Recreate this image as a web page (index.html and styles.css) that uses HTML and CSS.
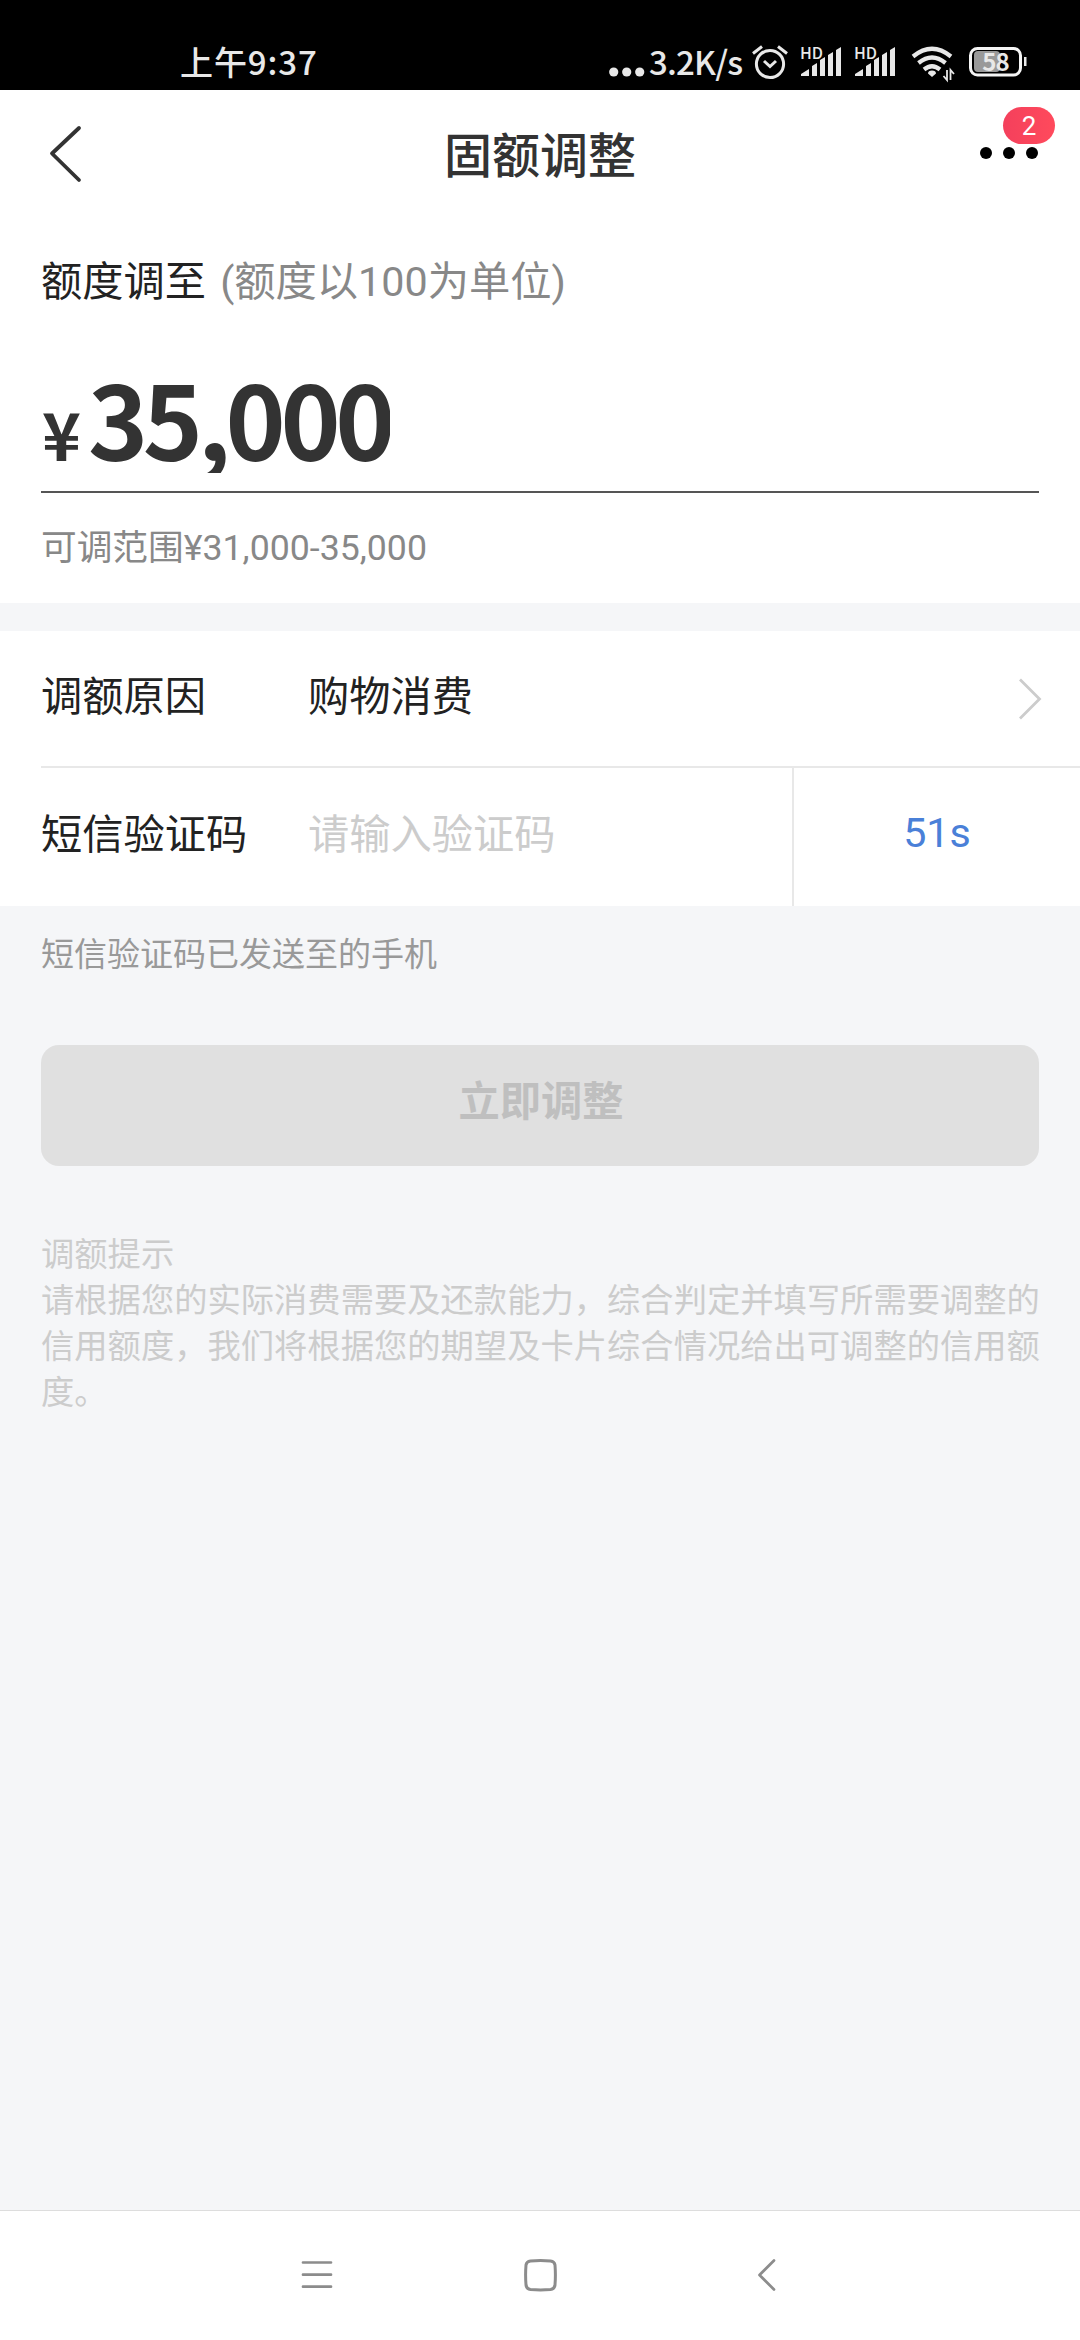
FILE: index.html
```
<!DOCTYPE html>
<html lang="zh-CN">
<head>
    <meta charset="UTF-8">
    <meta name="viewport" content="width=device-width, initial-scale=1.0">
    <title>固额调整</title>
    <link rel="stylesheet" href="styles.css">
</head>
<body>

    <!-- Status bar -->
    <div class="status-bar">
        <span class="status-time">上午9:37</span>
        <div class="status-icons">
            <svg class="icon-dots" width="36" height="50" viewBox="0 0 36 50" fill="#e8e8e8">
                <circle cx="4.7" cy="32" r="4.6"/>
                <circle cx="17.7" cy="32" r="4.6"/>
                <circle cx="30.7" cy="32" r="4.6"/>
            </svg>
            <span class="status-speed">3.2K/s</span>
            <svg class="icon-alarm" width="36" height="50" viewBox="0 0 36 50" fill="none" stroke="#e8e8e8" stroke-width="3">
                <circle cx="18" cy="24" r="13.6"/>
                <path d="M12 21l6 5.5 6-5.5M1 13.5l9-7M35 13.5l-9-7"/>
            </svg>
            <div class="signal">
                <span class="signal-hd">HD</span>
                <svg width="42" height="50" viewBox="0 0 42 50" fill="#e8e8e8">
                    <path d="M1 36v-2l8-5v7zM12 36V26l5-3v13zM20 36V20l5-3v19zM28 36V15l5-3v24zM36 36V10l5-3v29z"/>
                </svg>
            </div>
            <div class="signal">
                <span class="signal-hd">HD</span>
                <svg width="42" height="50" viewBox="0 0 42 50" fill="#e8e8e8">
                    <path d="M1 36v-2l8-5v7zM12 36V26l5-3v13zM20 36V20l5-3v19zM28 36V15l5-3v24zM36 36V10l5-3v29z"/>
                </svg>
            </div>
            <svg class="icon-wifi" width="44" height="50" viewBox="0 0 44 50" fill="none" stroke="#e8e8e8" stroke-width="4.200">
                <path d="M2 16.5q19-15.500 38 0M7.500 23q13.500-11 27 0M13 29.500q8-6.500 16 0"/>
                <path d="M21 37l-4-3.500q0-3 4-3t4 3z" fill="#e8e8e8" stroke="none"/>
                <path d="M36 30v10l-3.500-4M39.500 40v-10l3.500 4" stroke-width="1.800"/>
            </svg>
            <div class="battery">
                <svg width="60" height="50" viewBox="0 0 60 50">
                    <rect x="5" y="11" width="26" height="21" rx="4" fill="#999"/>
                    <rect x="1.500" y="8.500" width="50" height="26.500" rx="7" fill="none" stroke="#f5f5f5" stroke-width="3"/>
                    <path d="M55 17h2.500v9H55z" fill="#e8e8e8"/>
                </svg>
                <span class="battery-level">58</span>
            </div>
        </div>
    </div>

    <!-- Title bar -->
    <div class="header">
        <svg class="back" width="34" height="60" viewBox="0 0 34 60" fill="none" stroke="#333" stroke-width="3.800" stroke-linecap="round" stroke-linejoin="round">
            <path d="M30 5L3 30.500 30 57"/>
        </svg>
        <h1>固额调整</h1>
        <div class="more">
            <span class="more-dot"></span>
            <span class="more-dot"></span>
            <span class="more-dot"></span>
            <span class="badge">2</span>
        </div>
    </div>

    <!-- Amount -->
    <div class="amount-section">
        <div class="amount-label">额度调至 <span>(额度以100为单位)</span></div>
        <div class="amount-value">
            <span class="currency">¥</span>
            <span class="number">35,000</span>
        </div>
        <div class="amount-range">可调范围¥31,000-35,000</div>
    </div>

    <!-- Form rows -->
    <div class="form-list">
        <div class="form-row">
            <span class="row-label">调额原因</span>
            <span class="row-value">购物消费</span>
            <svg class="arrow" width="24" height="44" viewBox="0 0 24 44" fill="none" stroke="#ccc" stroke-width="2.800">
                <path d="M2 2.500L21.500 22 2 41.500"/>
            </svg>
        </div>
        <div class="form-row">
            <span class="row-label">短信验证码</span>
            <span class="row-value placeholder">请输入验证码</span>
            <span class="countdown">51s</span>
        </div>
    </div>

    <div class="sms-tip">短信验证码已发送至的手机</div>

    <button class="submit-button" disabled>立即调整</button>

    <div class="notice">
        <p>调额提示</p>
        <p>请根据您的实际消费需要及还款能力，综合判定并填写所需要调整的信用额度，我们将根据您的期望及卡片综合情况给出可调整的信用额度。</p>
    </div>

    <!-- System navigation -->
    <div class="nav-bar">
        <svg width="40" height="40" viewBox="0 0 40 40" fill="none" stroke="#8c8c8c" stroke-width="2.700" stroke-linecap="round">
            <path d="M7 7.500h28M7 19.700h28M7 31.700h28"/>
        </svg>
        <svg width="40" height="40" viewBox="0 0 40 40" fill="none" stroke="#8c8c8c" stroke-width="3">
            <path d="M8.500 6q10-1 20 0 4 .5 4.500 4 .8 10 0 20-.5 4-4.500 4.500-10 .8-20 0-4-.5-4.500-4.500-.8-10 0-20Q4.500 6.500 8.500 6z"/>
        </svg>
        <svg width="40" height="40" viewBox="0 0 40 40" fill="none" stroke="#8c8c8c" stroke-width="2.700" stroke-linecap="round" stroke-linejoin="round">
            <path d="M27 5.500L12.500 20 27 34.500"/>
        </svg>
    </div>

</body>
</html>
```
FILE: styles.css
```
* {
    box-sizing: border-box;
}
body {
    font-family: Roboto, "Noto Sans CJK SC", sans-serif;
    background-color: #f5f6f8;
    color: #222;
    margin: 0;
    height: 2340px;
    display: flex;
    flex-direction: column;
    overflow: hidden;
}
svg {
    display: block;
    flex-shrink: 0;
}
.status-bar {
    height: 90px;
    flex-shrink: 0;
    background-color: #000;
    color: #e8e8e8;
    font-family: "Noto Sans CJK SC", sans-serif;
    font-weight: 500;
    display: flex;
    justify-content: space-between;
    padding: 40px 51px 0 180px;
}
.status-time {
    font-size: 33px;
    line-height: 43px;
    letter-spacing: 0.9px;
}
.status-icons {
    display: flex;
}
.status-speed {
    width: 102px;
    margin-left: 4px;
    font-size: 33px;
    line-height: 43px;
    letter-spacing: -0.8px;
    white-space: nowrap;
}
.icon-alarm {
    margin-right: 12px;
    margin-left: 1px;
}
.signal {
    position: relative;
    width: 42px;
    margin-right: 12px;
}
.signal-hd {
    position: absolute;
    left: 0;
    top: 4px;
    font-size: 16px;
    line-height: 16px;
}
.icon-wifi {
    margin: 0 14px 0 3px;
}
.battery {
    position: relative;
}
.battery-level {
    position: absolute;
    left: 0;
    top: 9px;
    width: 53px;
    text-align: center;
    font-size: 24px;
    font-weight: 700;
    line-height: 24px;
    letter-spacing: -1px;
}
.header {
    height: 130px;
    flex-shrink: 0;
    background-color: #fff;
    display: flex;
    justify-content: space-between;
    align-items: center;
    padding: 0 42px 4px 49px;
}
.header h1 {
    margin: 7px 0 0 17px;
    font-size: 48px;
    font-weight: 500;
    line-height: 60px;
    color: #333;
}
.more {
    position: relative;
    display: flex;
    gap: 11px;
}
.more-dot {
    width: 12px;
    height: 12px;
    border-radius: 50%;
    background-color: #000;
}
.badge {
    position: absolute;
    right: -17px;
    bottom: 15px;
    width: 52px;
    height: 37px;
    border-radius: 19px;
    background: linear-gradient(90deg, #f4405c, #ff4a5c);
    color: #fff;
    font-size: 26px;
    line-height: 38px;
    text-align: center;
}
.amount-section {
    height: 383px;
    flex-shrink: 0;
    background-color: #fff;
    padding: 32px 41px 0;
}
.amount-label {
    font-size: 41.25px;
    line-height: 60px;
}
.amount-label span {
    color: #888;
    margin-left: 4px;
}
.amount-value {
    height: 181px;
    border-bottom: 2px solid #555;
    display: flex;
    align-items: baseline;
    padding-top: 48px;
    font-family: "Noto Sans CJK SC", sans-serif;
    font-weight: 700;
    color: #333;
}
.currency {
    margin-left: 1px;
    font-size: 66px;
    line-height: 113px;
}
.number {
    margin-left: 7px;
    font-size: 102px;
    line-height: 113px;
    letter-spacing: -5.3px;
    overflow: hidden;
}
.amount-range {
    margin-top: 30px;
    font-size: 35.7px;
    line-height: 50px;
    color: #888;
}
.form-list {
    margin-top: 28px;
    background-color: #fff;
    padding-left: 41px;
}
.form-row {
    display: flex;
    align-items: center;
    height: 135px;
    font-size: 41.25px;
}
.form-row + .form-row {
    height: 140px;
    border-top: 2px solid #e8e8e8;
}
.row-label, .row-value {
    padding-bottom: 12px;
}
.row-label {
    width: 267px;
}
.row-value {
    flex: 1;
}
.placeholder {
    color: #ccc;
}
.arrow {
    margin-right: 38px;
}
.countdown {
    width: 288px;
    height: 138px;
    border-left: 2px solid #e8e8e8;
    text-align: center;
    line-height: 131px;
    color: #4a80d8;
}
.sms-tip {
    padding: 24px 41px 0;
    font-size: 33px;
    line-height: 50px;
    color: #999;
}
.submit-button {
    margin: 65px 41px 0;
    height: 121px;
    flex-shrink: 0;
    padding: 0 0 16px 2px;
    border: none;
    border-radius: 18px;
    background-color: #e0e0e0;
    color: #bfbfbf;
    font-family: inherit;
    font-size: 41.25px;
    font-weight: 700;
}
.notice {
    margin-top: 66px;
    padding: 0 40px 0 41px;
    font-size: 33.3px;
    line-height: 46px;
    color: #ccc;
}
.notice p {
    margin: 0;
}
.nav-bar {
    height: 130px;
    flex-shrink: 0;
    margin-top: auto;
    background-color: #fff;
    border-top: 1px solid #ddd;
    display: flex;
    justify-content: space-between;
    padding: 44px 293px 0 296px;
}
```
